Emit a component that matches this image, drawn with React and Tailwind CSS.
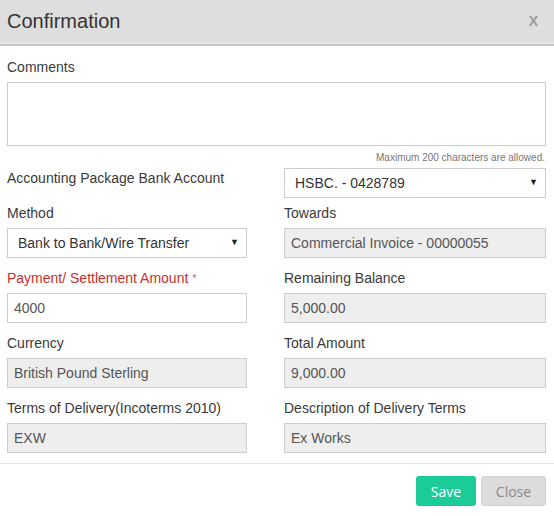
const font = { fontFamily: '"Liberation Sans", Arial, sans-serif' };

function Label({ children, className = "" }) {
  return <div className={`h-5 leading-5 text-[14px] text-[#3a3a3a] ${className}`}>{children}</div>;
}

function Field({ value, disabled }) {
  return (
    <div
      className={`h-[30px] border border-[#cccccc] px-[6px] flex items-center text-[14px] text-[#555] ${
        disabled ? "bg-[#eeeeee]" : "bg-white"
      }`}
    >
      {value}
    </div>
  );
}

function Select({ value }) {
  return (
    <div className="h-[30px] border border-[#cccccc] bg-white pl-[10px] pr-[7px] flex items-center justify-between text-[14px] text-[#333]">
      <span>{value}</span>
      <span className="text-[9px] text-[#222]">▼</span>
    </div>
  );
}

export default function App() {
  return (
    <div className="w-[554px] h-[516px] bg-white overflow-hidden" style={font}>
      <div className="h-[42px] bg-[#dedede] flex items-center justify-between pl-[7px] pr-[16px]">
        <h1 className="text-[20px] text-[#333]">Confirmation</h1>
        <span className="text-[14px] font-bold text-[#9a9a9a]">X</span>
      </div>
      <div className="h-[2px] bg-[#e6e6e6]" />
      <div className="h-[2px] bg-[#c9c9c9]" />

      <div className="pl-[7px] pr-[8px] pt-[11px]">
        <Label>Comments</Label>
        <textarea className="mt-[5px] block w-full h-[64px] border border-[#cccccc] resize-none outline-none" />
        <div className="h-[22px] flex items-center justify-end text-[10px] text-[#777] pr-[1px]">
          Maximum 200 characters are allowed.
        </div>

        <div className="grid grid-cols-[240px_262px] gap-x-[37px]">
          <Label>Accounting Package Bank Account</Label>
          <Select value="HSBC. - 0428789" />

          <Label className="mt-[5px]">Method</Label>
          <Label className="mt-[5px]">Towards</Label>
          <div className="mt-[5px]">
            <Select value="Bank to Bank/Wire Transfer" />
          </div>
          <div className="mt-[5px]">
            <Field value="Commercial Invoice - 00000055" disabled />
          </div>

          <Label className="mt-[10px] text-[#c9302c]">
            Payment/ Settlement Amount <span className="text-[#e05a5a] text-[11px] align-top">*</span>
          </Label>
          <Label className="mt-[10px]">Remaining Balance</Label>
          <div className="mt-[5px]">
            <Field value="4000" />
          </div>
          <div className="mt-[5px]">
            <Field value="5,000.00" disabled />
          </div>

          <Label className="mt-[10px]">Currency</Label>
          <Label className="mt-[10px]">Total Amount</Label>
          <div className="mt-[5px]">
            <Field value="British Pound Sterling" disabled />
          </div>
          <div className="mt-[5px]">
            <Field value="9,000.00" disabled />
          </div>

          <Label className="mt-[10px]">Terms of Delivery(Incoterms 2010)</Label>
          <Label className="mt-[10px]">Description of Delivery Terms</Label>
          <div className="mt-[5px]">
            <Field value="EXW" disabled />
          </div>
          <div className="mt-[5px]">
            <Field value="Ex Works" disabled />
          </div>
        </div>
      </div>

      <div className="mt-[10px] border-t border-[#e5e5e5] flex justify-end gap-[5px] pt-[12px] pr-[8px]">
        <button
          className="w-[60px] h-[30px] rounded-[3px] bg-[#1ccc98] text-white text-[14px]"
          style={{ fontFamily: '"Open Sans", sans-serif' }}
        >
          Save
        </button>
        <button
          className="w-[65px] h-[30px] rounded-[3px] bg-[#dcdcdc] text-[#8a8a8a] text-[14px] border border-[#d2d2d2]"
          style={{ fontFamily: '"Open Sans", sans-serif' }}
        >
          Close
        </button>
      </div>
    </div>
  );
}
